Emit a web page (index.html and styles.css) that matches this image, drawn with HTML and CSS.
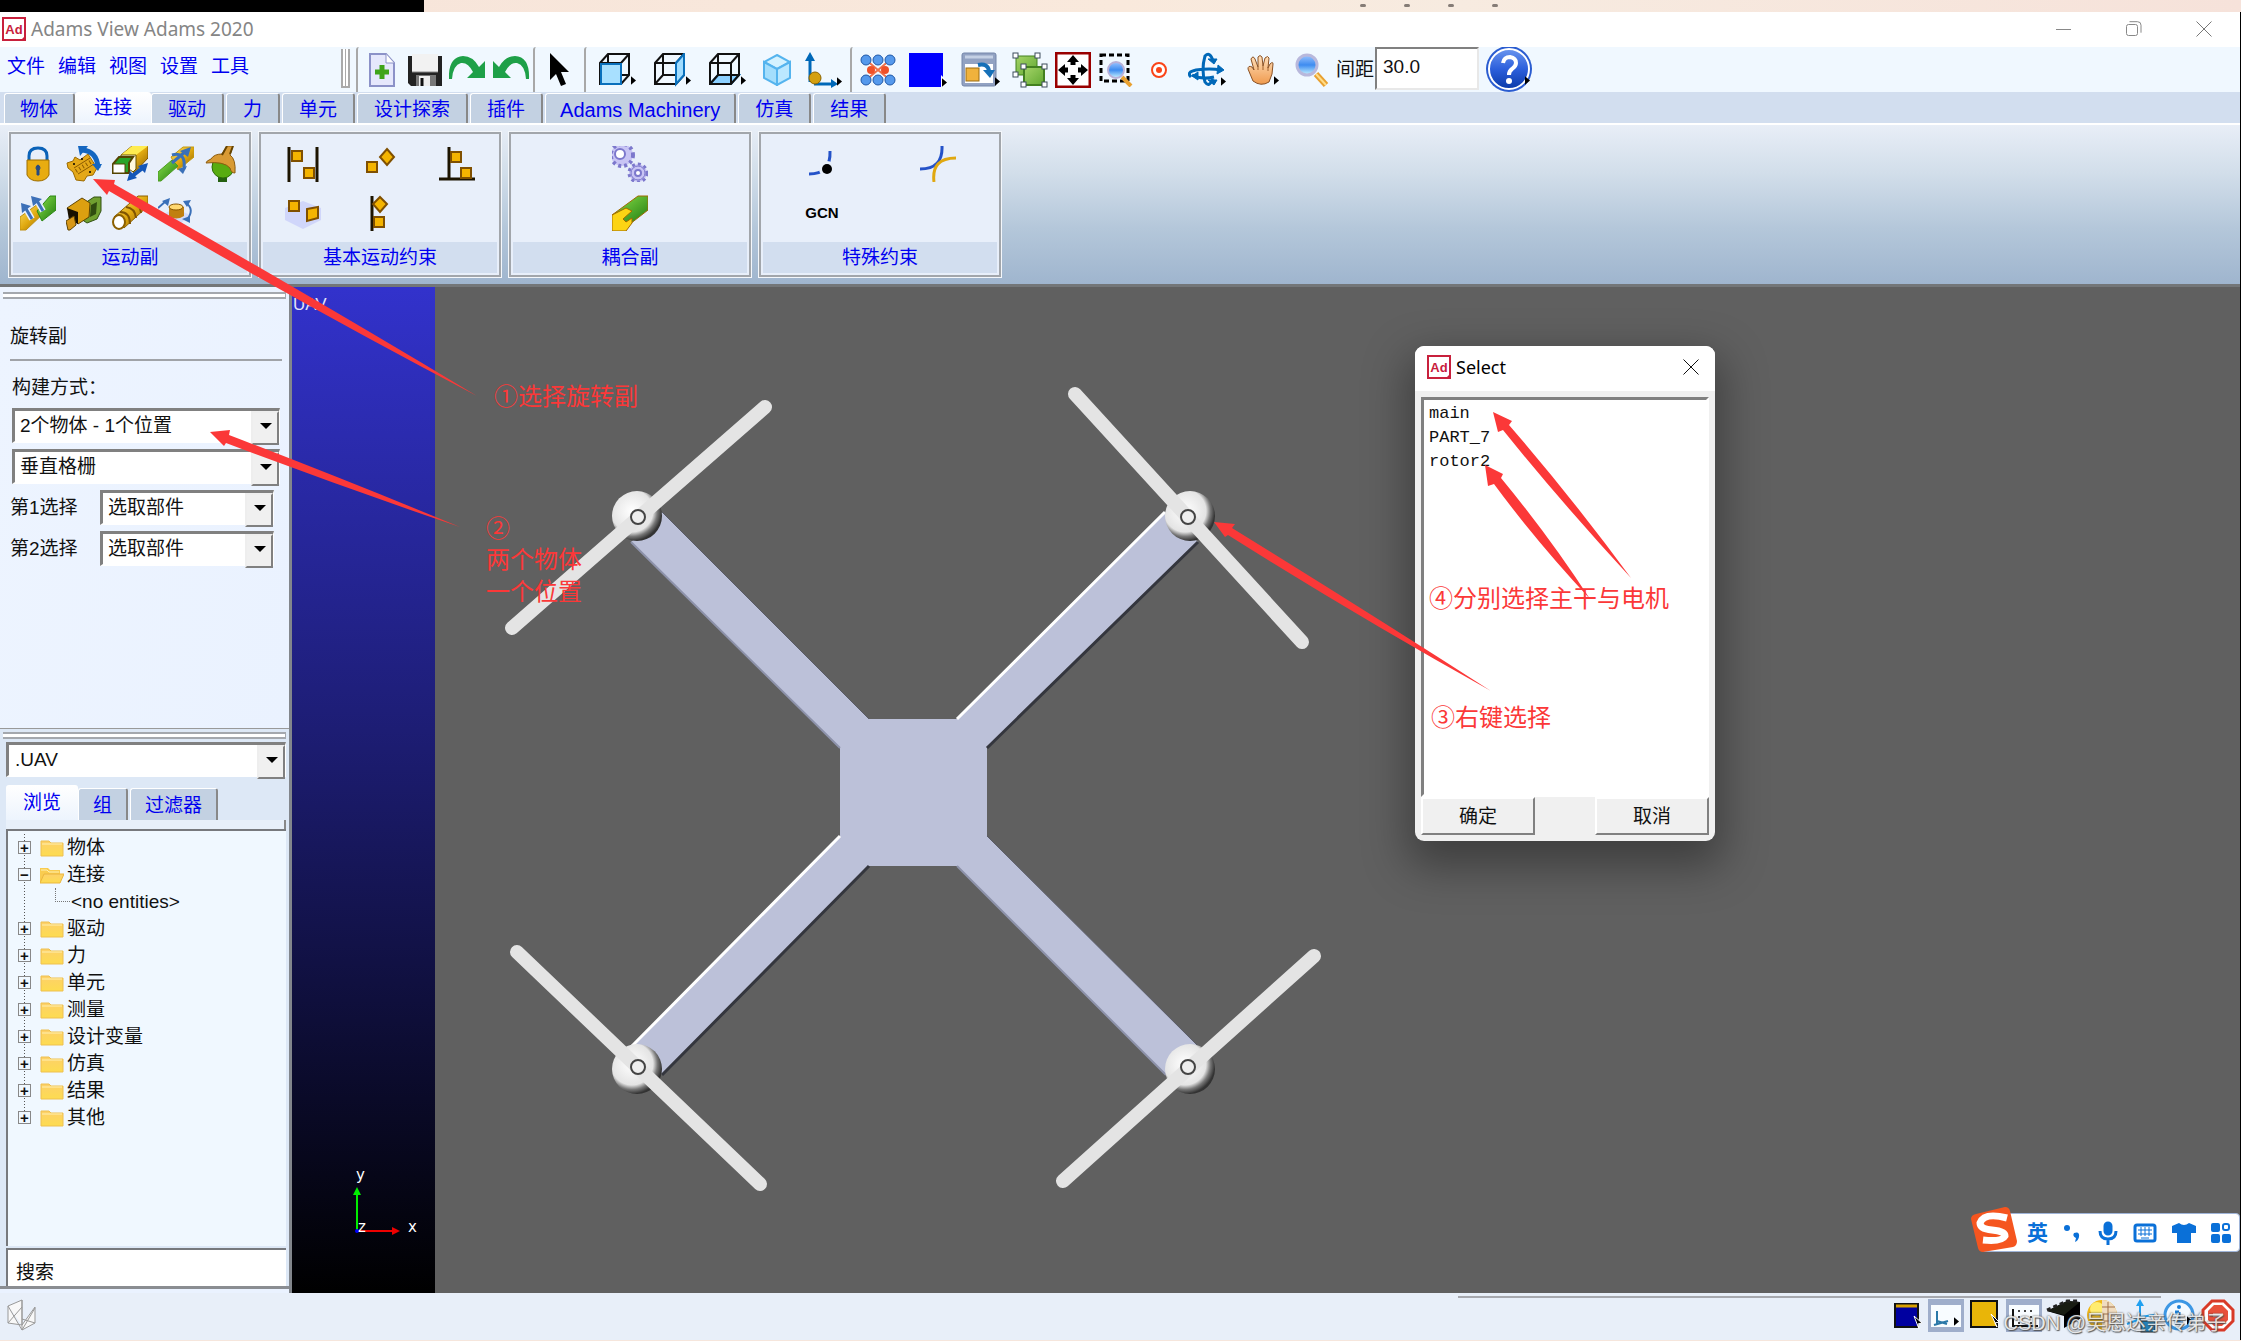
FILE: index.html
```html
<!DOCTYPE html>
<html lang="zh-CN">
<head>
<meta charset="utf-8">
<title>Adams View Adams 2020</title>
<link rel="stylesheet" href="styles.css">
</head>
<body>
<svg class="defs" aria-hidden="true">
  <defs>
    <linearGradient id="gold" x1="0" y1="0" x2="1" y2="1"><stop offset="0" stop-color="#ffe46a"/><stop offset=".5" stop-color="#e0a910"/><stop offset="1" stop-color="#8a5c00"/></linearGradient>
    <linearGradient id="leaf" x1="0" y1="0" x2="1" y2="1"><stop offset="0" stop-color="#8be24a"/><stop offset="1" stop-color="#1f7a10"/></linearGradient>
    <linearGradient id="folder" x1="0" y1="0" x2="0" y2="1"><stop offset="0" stop-color="#fdd06a"/><stop offset="1" stop-color="#fddc50"/></linearGradient>
    <linearGradient id="lens" x1="0" y1="0" x2="0" y2="1"><stop offset="0" stop-color="#9cc4ff"/><stop offset=".5" stop-color="#3e8cf0"/><stop offset="1" stop-color="#c8f4ff"/></linearGradient>
    <linearGradient id="help" x1="0" y1="0" x2="0" y2="1"><stop offset="0" stop-color="#6a95ee"/><stop offset=".5" stop-color="#2c5fdc"/><stop offset="1" stop-color="#0a3aa8"/></linearGradient>
    <linearGradient id="green" x1="0" y1="0" x2="1" y2="1"><stop offset="0" stop-color="#a5d468"/><stop offset="1" stop-color="#61a832"/></linearGradient>
    <linearGradient id="skin" x1="0" y1="0" x2="0" y2="1"><stop offset="0" stop-color="#ffe0bb"/><stop offset="1" stop-color="#ef9a4e"/></linearGradient>
    <symbol id="fly" viewBox="0 0 6 10"><path d="M0 0v10l6-5z" fill="#000"/></symbol>
    <symbol id="ad" viewBox="0 0 24 24"><rect x="1" y="1" width="22" height="22" fill="#fff" stroke="#c8203c" stroke-width="2"/><path d="M18 24h6v-6z" fill="#c8203c"/><text x="12" y="17" text-anchor="middle" font-family="Liberation Sans, sans-serif" font-weight="bold" font-size="13" fill="#c8203c">Ad</text></symbol>
    <symbol id="fold" viewBox="0 0 22 18"><path d="M0 17V2h8l2 2h12v13z" fill="url(#folder)" stroke="#eec050"/><path d="M1 5h20" stroke="#fff0b0"/></symbol>
    <symbol id="foldopen" viewBox="0 0 24 18"><path d="M0 17V2h8l2 2h10v13z" fill="#f9cc50"/><path d="M1 4h6l2 2h10" stroke="#fff0b0" fill="none"/><path d="M0 17l4-9h20l-4 9z" fill="url(#folder)" stroke="#eab63e"/></symbol>
    <symbol id="cube" viewBox="0 0 32 32"><path d="M1 10L9 1h21v21l-8 9H1zM1 10h21v21M22 10l8-9M9 1v21h21M9 22l-8 9" fill="none" stroke="#111" stroke-width="2"/></symbol>
    <symbol id="sq" viewBox="0 0 12 12"><rect x="1" y="1" width="10" height="10" fill="#f4b400" stroke="#805000" stroke-width="2"/></symbol>
  </defs>
</svg>

<div class="desktop"><div class="desktop-dark"></div><div class="desktop-dots"><i></i><i></i><i></i><i></i></div></div>

<div class="app">
  <header class="titlebar">
    <svg class="ad"><use href="#ad"/></svg>
    <h1>Adams View Adams 2020</h1>
    <div class="winbtns">
      <button aria-label="最小化"><svg width="16" height="16"><path d="M0 8.500h15" stroke="#888"/></svg></button>
      <button aria-label="还原"><svg width="16" height="16" fill="none" stroke="#888"><rect x=".5" y="3.500" width="11" height="11" rx="2"/><path d="M3.500 .7h8q3.500 0 3.500 3.500v7.500"/></svg></button>
      <button aria-label="关闭"><svg width="16" height="16" stroke="#777"><path d="M.5.5l15 15M15.500.5l-15 15"/></svg></button>
    </div>
  </header>

  <div class="toolbar">
    <nav class="menu"><a href="#">文件</a><a href="#">编辑</a><a href="#">视图</a><a href="#">设置</a><a href="#">工具</a></nav>
    <div class="grip"></div>
    <div class="tools t1">
      <button class="s" aria-label="新建"><svg width="26" height="34"><path d="M1 1h16l8 9v23H1z" fill="#e6e8fc" stroke="#8c92c8" stroke-width="2"/><path d="M17 1v9h8" fill="#fff" stroke="#8c92c8"/><path d="M13 12v14M6 19h14" stroke="#3fa41a" stroke-width="5"/></svg></button>
      <button class="s" aria-label="保存"><svg width="34" height="32"><path d="M0 2h34v30H3l-3-3z" fill="#222"/><rect x="4" y="0" width="26" height="18" fill="#f2f2f2"/><path d="M4 18h26" stroke="#888"/><rect x="8" y="21" width="20" height="11" fill="#777"/><rect x="11" y="22" width="11" height="10" fill="#eee"/><path d="M14 24v8" stroke="#111" stroke-width="3"/></svg></button>
      <button class="s" aria-label="重做"><svg class="up" width="38" height="26"><path d="M0 24Q-1 2 14 1q10 0 16 11l6-6v17H18l6-6Q19 7 12 8 4 10 3 24z" fill="#1ea048"/></svg></button>
      <button class="s" aria-label="撤销"><svg class="up" width="38" height="26"><path d="M37 24Q38 2 23 1 13 1 7 12L1 6v17h18l-6-6q5-10 12-9 8 2 9 16z" fill="#1ea048"/></svg></button>
    </div>
    <div class="tools t2">
      <button class="m" aria-label="选择"><svg width="20" height="34"><path d="M1 0v27l6-6 5 12 5-2-5-12h8z" fill="#000"/></svg></button>
    </div>
    <div class="tools t3">
      <button class="l" aria-label="前视图"><svg width="38" height="34"><use href="#cube" width="32" height="32"/><rect x="2" y="11" width="20" height="20" fill="#a8e0ff" stroke="#0a70bc" stroke-width="2"/><use href="#fly" x="32" y="23" width="5" height="9"/></svg></button>
      <button class="l" aria-label="右视图"><svg width="38" height="34"><use href="#cube" width="32" height="32"/><path d="M22 10l8-9v21l-8 9z" fill="#a0dcff" stroke="#0a70bc" stroke-width="2"/><use href="#fly" x="32" y="23" width="5" height="9"/></svg></button>
      <button class="l" aria-label="底视图"><svg width="38" height="34"><path d="M1 31l8-9h21l-8 9z" fill="#8cd0ff" stroke="#0a70bc" stroke-width="2"/><use href="#cube" width="32" height="32"/><use href="#fly" x="32" y="23" width="5" height="9"/></svg></button>
      <button class="s" aria-label="等轴测"><svg width="28" height="32" stroke="#55b4ee" stroke-width="2"><path d="M14 1l13 7-13 7L1 8z" fill="#d4f2ff"/><path d="M1 8l13 7v16L1 24z" fill="#a4defc"/><path d="M27 8l-13 7v16l13-7z" fill="#bbe8ff"/></svg></button>
      <button class="m" aria-label="坐标"><svg width="38" height="36"><path d="M6 30V6M10 32h20" stroke="#0068b8" stroke-width="3"/><path d="M6 0l5 9H1zM34 32l-7-5v9z" fill="#0068b8"/><circle cx="11" cy="26" r="6" fill="#d4a010" stroke="#8c6400"/><use href="#fly" x="33" y="25" width="5" height="9"/></svg></button>
    </div>
    <div class="tools t4">
      <button class="m" aria-label="模型"><svg width="36" height="32"><path d="M6 6l24 20M30 6L6 26" stroke="#f0704a" stroke-width="2"/><g fill="#5599ec" stroke="#2058a8"><circle cx="6" cy="6" r="5"/><circle cx="18" cy="6" r="5"/><circle cx="30" cy="6" r="5"/><circle cx="6" cy="26" r="5"/><circle cx="18" cy="26" r="5"/><circle cx="30" cy="26" r="5"/></g><circle cx="11" cy="16" r="4" fill="#f05028"/><circle cx="25" cy="16" r="4" fill="#f05028"/></svg></button>
      <button class="m" aria-label="颜色"><svg width="38" height="34"><rect width="34" height="34" fill="#0000fe"/><path d="M32 22l7 7-7 7z" fill="#fff"/><use href="#fly" x="33" y="25" width="5" height="9"/></svg></button>
      <button class="l" aria-label="窗口"><svg width="40" height="36"><rect x="1" y="1" width="34" height="33" rx="2" fill="#92a2c2" stroke="#7486aa"/><path d="M4 5h28" stroke="#c4d0e4" stroke-width="3"/><rect x="4" y="12" width="28" height="19" fill="#fff"/><rect x="5" y="16" width="13" height="13" fill="#f0b23c" stroke="#9c6c10"/><path d="M17 13q10-2 11 6" stroke="#1670b8" stroke-width="4" fill="none"/><path d="M22 18h12l-5 8z" fill="#1670b8"/><use href="#fly" x="34" y="25" width="5" height="9"/></svg></button>
      <button class="s" aria-label="分组"><svg width="36" height="36"><rect x="4" y="4" width="21" height="19" fill="url(#green)" stroke="#438020"/><rect x="12" y="15" width="20" height="18" fill="url(#green)" stroke="#438020" stroke-width="2"/><g fill="#fff" stroke="#3c4c5c"><rect x="1" y="1" width="5" height="5"/><rect x="23" y="1" width="5" height="5"/><rect x="1" y="20" width="5" height="5"/><rect x="9" y="12" width="5" height="5"/><rect x="30" y="12" width="5" height="5"/><rect x="9" y="30" width="5" height="5"/><rect x="30" y="30" width="5" height="5"/></g></svg></button>
      <button class="s" aria-label="适合窗口"><svg width="36" height="36"><rect x="1" y="1" width="34" height="34" fill="#fff" stroke="#900" stroke-width="3"/><path d="M18 7v6M18 23v6M7 18h6M23 18h6" stroke="#000" stroke-width="5"/><path d="M18 3l6 7H12zM18 33l6-7H12zM3 18l7-6v12zM33 18l-7-6v12z"/></svg></button>
      <button class="s" aria-label="框选缩放"><svg width="34" height="34"><rect x="2" y="2" width="27" height="26" fill="none" stroke="#000" stroke-width="3" stroke-dasharray="5 3"/><path d="M23 24l9 9" stroke="#e8a030" stroke-width="4"/><circle cx="17" cy="17" r="8" fill="url(#lens)" stroke="#b8b0d8" stroke-width="2"/></svg></button>
      <button class="s" aria-label="中心"><svg width="18" height="18"><circle cx="9" cy="9" r="7" fill="#fff" stroke="#fa4418" stroke-width="2"/><circle cx="9" cy="9" r="3" fill="#fa4418"/></svg></button>
      <button class="l" aria-label="旋转"><svg width="40" height="36" fill="none" stroke="#0068b8" stroke-width="3"><path d="M25 9Q22-1 17 4q-4 14 0 26 4 6 8-3M3 25Q-2 20 8 18q14-2 25 0M4 23q10 5 22 2"/><path d="M20 7h9l-3 5zM30 13l6 5-7 4zM20 28h9l-3 5zM10 20v8l-6-4z" fill="#0068b8" stroke-width="1"/><use href="#fly" x="33" y="25" width="5" height="9" stroke="none"/></svg></button>
      <button class="l" aria-label="平移"><svg width="32" height="32"><path d="M6 27L1 15q0-4 4-2l2 3L4 5q2-4 4 0l3 8V3q2-3 4 0l1 9 2-8q3-3 4 0l-1 10 2-4q3-3 3 0l-1 10-3 8q-8 5-16-1z" fill="url(#skin)" stroke="#8a5226"/><path d="M11 13v3M16 12v4M21 13v4" stroke="#a0622e"/><use href="#fly" x="27" y="22" width="5" height="9"/></svg></button>
      <button class="s" aria-label="缩放"><svg width="34" height="34"><path d="M21 21l10 11" stroke="#e8a030" stroke-width="6"/><path d="M21 21l10 11" stroke="#ffdd88" stroke-width="2"/><circle cx="12" cy="12" r="10" fill="url(#lens)" stroke="#b8b8dc" stroke-width="3"/></svg></button>
    </div>
    <label class="spacing" for="spacing">间距</label>
    <input class="sunk" id="spacing" type="text" value="30.0">
    <button class="help" aria-label="帮助"><svg width="50" height="45"><circle cx="24" cy="22" r="23" fill="#2a5cd0"/><circle cx="24" cy="22" r="20" fill="url(#help)" stroke="#fff" stroke-width="2"/><path d="M18 16q1-6 7-6 6 1 6 6 0 3-4 6-3 2-3 6" fill="none" stroke="#fff" stroke-width="4"/><circle cx="24" cy="34" r="3" fill="#fff"/><use href="#fly" x="40" y="29" width="5" height="9"/></svg></button>
  </div>

  <div class="tabs main-tabs" role="tablist">
    <button class="first">物体</button><button class="active">连接</button><button>驱动</button><button>力</button><button>单元</button><button>设计探索</button><button>插件</button><button class="latin">Adams Machinery</button><button>仿真</button><button>结果</button>
  </div>

  <section class="ribbon">
    <div class="group">
      <div class="icons five">
        <button aria-label="固定副"><svg viewBox="0 0 36 36"><path d="M9 16V10q0-8 9-8t9 8v6" fill="none" stroke="#0a62b8" stroke-width="3"/><path d="M7 14h22v15q-3 6-11 6T7 29z" fill="#e8ac10" stroke="#9c6c00"/><path d="M18 19a3 3 0 0 1 1 5v5h-2v-5a3 3 0 0 1 1-5z" fill="#264a80" stroke="#264a80"/></svg></button>
        <button aria-label="旋转副"><svg viewBox="0 0 36 36"><path d="M1 17l6-2 2-4 5 3 8-6 9 14-4 7-6 1-3 5-8-1-3-8-5-4z" fill="#e4a818" stroke="#9c6a00"/><path d="M8 22l16-10M12 28l16-10" stroke="#8a5a00"/><path d="M10 25l16-10" stroke="#8a5a00" stroke-width="4" stroke-dasharray="1 3"/><circle cx="8" cy="18" r="1"/><circle cx="16" cy="13" r="1"/><circle cx="24" cy="26" r="1"/><path d="M16 4q15 1 16 18" fill="none" stroke="#1466c0" stroke-width="5"/><path d="M12 0h10l-8 10zM26 18h10l-4 7z" fill="#1466c0"/></svg></button>
        <button aria-label="移动副"><svg viewBox="0 0 36 36"><path d="M9 9L20 0h16v12L22 27z" fill="url(#gold)" stroke="#7c5400"/><path d="M9 9L20 0h16L24 9z" fill="#ffec50"/><path d="M9 9h15v14l-3 3-4-3V13H9z" fill="#fff8dc" stroke="#665000"/><path d="M1 18l6-7h14l-4 6v10H1z" fill="#2aa428" stroke="#554400" stroke-width="2"/><path d="M1 18h12v9H1z" fill="#fff" stroke="#554400"/><path d="M19 31L32 21" stroke="#1456b8" stroke-width="4"/><path d="M36 17l-3 10-7-7zM15 35l3-10 7 7z" fill="#1456b8"/></svg></button>
        <button aria-label="圆柱副"><svg viewBox="0 0 36 36"><path d="M13 11L25 1h11v10L20 24z" fill="url(#gold)" stroke="#c49a10"/><path d="M0 26l14-12 6 6L3 35H0z" fill="url(#leaf)" stroke="#4c9c20"/><path d="M14 17L28 5M14 9q14-4 12 14" stroke="#3a70b8" stroke-width="3" fill="none"/><path d="M33 1l-3 10-8-6zM29 20l-4 8-5-5z" fill="#3a70b8"/></svg></button>
        <button aria-label="球副"><svg viewBox="0 0 36 36"><path d="M14 26h9v10h-9z" fill="#256010"/><circle cx="19" cy="21" r="11" fill="#58ac10" stroke="#2c6c08"/><path d="M2 17q0-2 5-4 3-5 11-5l5-8h6l-3 9q6 4 5 18-4 0-5-5Q20 15 2 17z" fill="#d89a34" stroke="#8c5c10"/><path d="M23 0l-5 9M29 0l-3 8" stroke="#664400" stroke-width="2"/></svg></button>
        <button aria-label="平面副"><svg viewBox="0 0 36 36"><path d="M0 22L18 9l8 7L6 35H0z" fill="url(#gold)" stroke="#c09010"/><path d="M17 16L30 1h6v14L22 26z" fill="url(#leaf)" stroke="#2c8814"/><path d="M12 24L5 12M23 16L16 4" stroke="#e8f0ff" stroke-width="6"/><path d="M12 24L5 12M23 16L16 4" stroke="#3c70b8" stroke-width="3"/><path d="M1 8l10 3-9 7zM11 1l11 3-9 7z" fill="#3c70b8"/></svg></button>
        <button aria-label="恒速副"><svg viewBox="0 0 36 36"><path d="M19 8l9-6h7v14l-4 8-10 4-6-4z" fill="#70a030" stroke="#305010"/><path d="M25 10l6-3-1 12-6 3z" fill="#304c10"/><path d="M1 13L16 3l8 5-1 14-11 7z" fill="#dca010" stroke="#604400"/><path d="M1 13l11 4v12l-9-4z" fill="#181000"/><path d="M0 26l8-5 2 9-6 5H2z" fill="#d89818" stroke="#604400"/></svg></button>
        <button aria-label="螺旋副"><svg viewBox="0 0 36 36"><path d="M2 22L26 1h10v10L12 33z" fill="url(#gold)" stroke="#8c6000"/><g fill="none" stroke="#805400" stroke-width="2"><path d="M8 17q10 0 10 12M14 12q9 1 10 11M20 7q8 1 9 11"/></g><ellipse cx="7" cy="27" rx="6" ry="7" fill="#fff" stroke="#8c6000" stroke-width="2"/></svg></button>
        <button aria-label="胡克副"><svg viewBox="0 0 36 36"><path d="M4 20l13-7 15 7-15 14z" fill="#d4dcfa"/><path d="M11 12v9q7 5 15 0v-9z" fill="#c08010"/><ellipse cx="18" cy="12" rx="7" ry="3" fill="#ffd870" stroke="#8c5800"/><path d="M0 13L8 6M28 8q9 6 1 17" stroke="#3a70b8" stroke-width="2" fill="none"/><path d="M12 3l-2 8-6-5zM25 6l8-1-4 7zM24 24l8-3v7z" fill="#3a70b8"/></svg></button>
      </div>
      <h2>运动副</h2>
    </div>
    <div class="group">
      <div class="icons three">
        <button aria-label="平行"><svg viewBox="0 0 36 36"><path d="M4 1v35M32 1v35" stroke="#1c1400" stroke-width="3"/><use href="#sq" x="6" y="4" width="12" height="12"/><use href="#sq" x="18" y="21" width="12" height="12"/></svg></button>
        <button aria-label="方向"><svg viewBox="0 0 36 36"><use href="#sq" x="4" y="15" width="12" height="12"/><path d="M25 3l7 8-7 8-7-8z" fill="#f4b400" stroke="#805000" stroke-width="2"/></svg></button>
        <button aria-label="垂直"><svg viewBox="0 0 36 36"><path d="M10 1v33M0 33h36" stroke="#1c1400" stroke-width="3"/><use href="#sq" x="11" y="5" width="12" height="12"/><use href="#sq" x="21" y="21" width="12" height="12"/></svg></button>
        <button aria-label="共面"><svg viewBox="0 0 36 36"><path d="M0 13l18-7 18 7v12l-18 9-18-9z" fill="#d0d6fa"/><use href="#sq" x="3" y="5" width="12" height="12"/><path d="M22 14l11-2v11l-11 3z" fill="#f4b400" stroke="#805000" stroke-width="2"/></svg></button>
        <button aria-label="共线"><svg viewBox="0 0 36 36"><path d="M10 1v35" stroke="#1c1400" stroke-width="3"/><path d="M18 2l7 7-7 8-7-8z" fill="#f4b400" stroke="#805000" stroke-width="2"/><use href="#sq" x="11" y="21" width="12" height="12"/></svg></button>
      </div>
      <h2>基本运动约束</h2>
    </div>
    <div class="group">
      <div class="icons one">
        <button aria-label="齿轮"><svg viewBox="0 0 36 36" fill="#c8c4f4" stroke="#7c78cc"><circle cx="10" cy="9" r="11" stroke-width="4" stroke-dasharray="3 3"/><circle cx="10" cy="9" r="9" stroke="none"/><circle cx="8" cy="8" r="5" fill="#fff" stroke-width="2"/><circle cx="26" cy="27" r="9" stroke-width="3" stroke-dasharray="3 3"/><circle cx="26" cy="27" r="7"/><circle cx="26" cy="27" r="3" fill="#fff" stroke-width="2"/></svg></button>
        <button aria-label="耦合"><svg viewBox="0 0 36 36"><path d="M0 20L26 1h10v14L18 29H9z" fill="url(#leaf)" stroke="#a06a00"/><path d="M0 20l14-7 6 3-9 8 3 3 6-4v5l-6 8H0z" fill="#fcd414" stroke="#a06a00"/></svg></button>
      </div>
      <h2>耦合副</h2>
    </div>
    <div class="group">
      <div class="icons two">
        <button aria-label="点线约束"><svg viewBox="0 0 36 36"><path d="M5 28q22 0 21-23" fill="none" stroke="#2452c8" stroke-width="3"/><circle cx="23" cy="23" r="8" fill="#e8effa"/><circle cx="23" cy="23" r="5"/></svg></button>
        <button aria-label="线线约束"><svg viewBox="0 0 36 36" fill="none" stroke-width="3"><path d="M0 23Q23 23 22 0" stroke="#2452c8"/><path d="M36 12Q11 12 14 36" stroke="#e0a810"/></svg></button>
        <button class="gcn">GCN</button>
      </div>
      <h2>特殊约束</h2>
    </div>
  </section>

  <main class="work">
    <aside class="side">
      <form class="joint">
        <div class="handle"></div>
        <h3>旋转副</h3>
        <fieldset>
          <label for="how">构建方式：</label>
          <div class="drop"><select id="how"><option>2个物体 - 1个位置</option></select></div>
          <div class="drop"><select aria-label="方向"><option>垂直格栅</option></select></div>
          <div class="pick"><label for="p1">第1选择</label><div class="drop"><select id="p1"><option>选取部件</option></select></div></div>
          <div class="pick"><label for="p2">第2选择</label><div class="drop"><select id="p2"><option>选取部件</option></select></div></div>
        </fieldset>
      </form>
      <div class="browser">
        <div class="handle"></div>
        <div class="drop"><select aria-label="模型"><option>.UAV</option></select></div>
        <div class="tabs" role="tablist"><button class="active">浏览</button><button>组</button><button>过滤器</button></div>
        <div class="lip"></div>
        <ul class="tree">
          <li><button>+</button><svg><use href="#fold"/></svg>物体</li>
          <li><button>−</button><svg><use href="#foldopen"/></svg>连接</li>
          <li class="leaf"><i></i>&lt;no entities&gt;</li>
          <li><button>+</button><svg><use href="#fold"/></svg>驱动</li>
          <li><button>+</button><svg><use href="#fold"/></svg>力</li>
          <li><button>+</button><svg><use href="#fold"/></svg>单元</li>
          <li><button>+</button><svg><use href="#fold"/></svg>测量</li>
          <li><button>+</button><svg><use href="#fold"/></svg>设计变量</li>
          <li><button>+</button><svg><use href="#fold"/></svg>仿真</li>
          <li><button>+</button><svg><use href="#fold"/></svg>结果</li>
          <li><button>+</button><svg><use href="#fold"/></svg>其他</li>
        </ul>
        <input class="search" type="text" aria-label="搜索" value="搜索">
      </div>
    </aside>

    <section class="view">
      <div class="sky"><span>UAV</span>
        <svg class="axes" width="80" height="90"><path d="M15 70V30" stroke="#0e0" stroke-width="2"/><path d="M15 26l4 8h-8z" fill="#0e0"/><path d="M16 70h38" stroke="#e00" stroke-width="2"/><path d="M58 70l-8-4v8z" fill="#e00"/><circle cx="15" cy="70" r="2" fill="#00f"/><g font-family="DejaVu Sans, sans-serif" font-size="15" fill="#fff"><text x="14" y="19">y</text><text x="66" y="71">x</text><text x="16" y="71">z</text></g></svg>
      </div>
      <svg class="drone" viewBox="292 287 1948 1006" preserveAspectRatio="xMinYMin meet">
        <defs><radialGradient id="motor" cx=".4" cy=".4" r=".6"><stop offset="0" stop-color="#fff"/><stop offset=".7" stop-color="#e4e4e4"/><stop offset=".85" stop-color="#777"/><stop offset="1" stop-color="#333"/></radialGradient></defs>
        <path d="M840 748L631 542l31-30 207 207h88l208-207 33 30-211 206v88l211 210-32 29-209-209h-88l-207 209-31-28 209-211z" fill="#bcc1d9"/>
        <g fill="none" stroke-width="3">
          <path d="M957 719l208-207M631 1047l209-211" stroke="#fff"/>
          <path d="M987 748l211-206M662 1075l207-209" stroke="#34363e"/>
          <path d="M869 719L662 512M987 836l211 210" stroke="#5a5c68" stroke-width="1"/>
          <path d="M840 748L631 542M957 866l209 209" stroke="#8d92aa" stroke-width="2"/>
        </g>
        <g fill="url(#motor)"><circle cx="637" cy="516" r="25"/><circle cx="1190" cy="516" r="25"/><circle cx="637" cy="1069" r="25"/><circle cx="1190" cy="1069" r="25"/></g>
        <g stroke="#e4e4e4" stroke-width="14" stroke-linecap="round"><path d="M765 407L512 628M1075 394l227 248M517 952l243 232M1314 956l-251 225"/></g>
        <g fill="#eee" stroke="#444" stroke-width="2"><circle cx="638" cy="517" r="7"/><circle cx="1188" cy="517" r="7"/><circle cx="638" cy="1067" r="7"/><circle cx="1188" cy="1067" r="7"/></g>
      </svg>

      <div class="dialog" role="dialog" aria-label="Select">
        <header><svg class="ad"><use href="#ad"/></svg><h2>Select</h2><button aria-label="关闭"><svg width="16" height="16" stroke="#111"><path d="M.5.5l15 15M15.500.5l-15 15"/></svg></button></header>
        <ul class="list"><li>main</li><li>PART_7</li><li>rotor2</li></ul>
        <footer><button>确定</button><button>取消</button></footer>
      </div>

      <div class="ime">
        <svg width="48" height="46"><path d="M6 8L35 1q4 0 5 4l7 30q0 5-4 6l-30 5q-4 0-5-4L1 13q0-4 5-5z" fill="#f5551f"/><path d="M37 12Q14 6 10 17q0 6 12 7 13 1 13 6-3 6-22 4" fill="none" stroke="#fff" stroke-width="7"/></svg>
        <b>英</b>
        <svg width="20" height="22"><circle cx="4" cy="6" r="3" fill="#0a70d8"/><path d="M11 11q6-2 5 4-1 4-4 5l1-4q-4-2-2-5z" fill="#0a70d8"/></svg>
        <svg width="20" height="24" fill="none" stroke="#0a70d8" stroke-width="3"><rect x="7" y="2" width="6" height="11" rx="3" fill="#0a70d8"/><path d="M2 10q0 8 8 8t8-8M10 18v6"/></svg>
        <svg width="24" height="20" fill="none" stroke="#0a70d8"><rect x="2" y="2" width="20" height="16" rx="2" stroke-width="3"/><path d="M5 7h14M5 11h14M8 15h8M8 4v9M12 4v9M16 4v9" stroke-width="1"/></svg>
        <svg width="24" height="22"><path d="M7 1q5 4 10 0l7 3v7h-5v10H5V11H0V4z" fill="#0a70d8"/></svg>
        <svg width="20" height="20" fill="#0a70d8"><rect width="9" height="9" rx="2"/><rect y="11" width="9" height="9" rx="2"/><rect x="11" y="11" width="9" height="9" rx="2"/><rect x="12" y="1" width="6" height="6" rx="2" fill="none" stroke="#0a70d8" stroke-width="2"/></svg>
      </div>
    </section>
  </main>

  <footer class="status">
    <svg class="wing" width="30" height="32" fill="#f8f8f8" stroke="#999"><path d="M1 7l14-6v25L1 24zM1 7l14 24 13-7V8L15 26M15 31V1M1 24L15 8M15 31L28 9M15 20l13 4"/></svg>
    <div class="status-tools">
      <button aria-label="背景"><svg width="36" height="34"><rect x="6" y="5" width="23" height="23" fill="#0000a0" stroke="#111" stroke-width="2"/><path d="M7 7h21" stroke="#d8a000" stroke-width="3"/><path d="M25 17l8 7-4 1 1 5z" fill="#000" stroke="#fff"/></svg></button>
      <button aria-label="视图坐标"><svg width="36" height="34"><rect width="36" height="33" fill="#9faecb"/><rect x="3" y="6" width="30" height="22" fill="#f8fcff"/><path d="M9 26V12M6 26l14-4M9 22l10 3" stroke="#2a78a8" stroke-width="2"/><use href="#fly" x="26" y="18" width="5" height="9"/></svg></button>
      <button aria-label="渲染"><svg width="36" height="34"><rect x="4" y="2" width="26" height="26" fill="#e9b508" stroke="#111" stroke-width="2"/><path d="M24 15l8 8-4 1 2 4z" stroke="#fff"/></svg></button>
      <button aria-label="栅格"><svg width="36" height="34"><rect width="36" height="33" fill="#9faecb"/><rect x="3" y="6" width="30" height="23" fill="#f8fcff"/><path d="M7 10v17h25" stroke="#111" stroke-width="2" fill="none"/><path d="M12 12h18M12 18h18M12 24h18" stroke="#444" stroke-width="2" stroke-dasharray="2 4"/></svg></button>
      <button aria-label="实体"><svg width="36" height="34"><path d="M2 12L22 2l13 1v17L19 29V17z" fill="#000"/><path d="M2 12L22 2l13 1-16 13z" fill="#181c12"/><path d="M2 11L22 2h12" fill="none" stroke="#222" stroke-width="3" stroke-dasharray="4 3"/></svg></button>
      <button aria-label="线框"><svg width="36" height="34"><circle cx="18" cy="16" r="15" fill="#f0b818"/><circle cx="13" cy="10" r="7" fill="#ffec70"/><path d="M18 1a15 15 0 0 1 0 30z" fill="#f0dcc0"/><path d="M18 8h13M18 15h15M18 22h13M24 3v26" stroke="#a07048" fill="none"/></svg></button>
      <button aria-label="图标"><svg width="36" height="34"><path d="M17 22V3M17 18l14-2M17 20L4 25" stroke="#20a0f0" stroke-width="2"/><path d="M17 0l4 7h-8z" fill="#20a0f0"/><rect x="18" y="22" width="14" height="11" fill="#2484bc" stroke="#222"/></svg></button>
      <button aria-label="信息"><svg width="36" height="34"><circle cx="17" cy="16" r="14" fill="#f4faff" stroke="#3d97e4" stroke-width="3"/><path d="M17 13v11M13 24h8M13 13h4" stroke="#1c80d8" stroke-width="3"/><circle cx="17" cy="8" r="2" fill="#1c80d8"/><use href="#fly" x="25" y="17" width="5" height="9"/></svg></button>
      <button aria-label="停止"><svg width="36" height="34"><path d="M11 2h12l9 9v11l-9 9H11l-9-9V11z" fill="#fff" stroke="#d83a28" stroke-width="3"/><path d="M13 6h8l6 6v9l-6 6h-8l-6-6v-9z" fill="#e8503a"/><path d="M12 16h10" stroke="#fff" stroke-width="3"/></svg></button>
    </div>
    <span class="watermark">CSDN @吴恩达亲传弟子</span>
  </footer>
</div>

<svg class="notes" viewBox="0 0 2241 1341" preserveAspectRatio="xMinYMin meet">
  <path d="M93 179l22 1-1 4q190 108 363 212-180-94-368-205l-2 4zM210 432l20-2-1 5q120 46 231 92-118-40-234-84l-2 3zM1214 522l21 2-3 4q136 84 259 163-136-76-263-156l-3 2zM1493 412l19 9-3 4q64 74 122 153-70-76-128-148l-5 2zM1485 465l18 9-2 4q48 58 89 121-54-58-96-115l-6 2z"/>
  <text x="494" y="405">①选择旋转副</text>
  <text x="486" y="537">②</text>
  <text x="486" y="568">两个物体</text>
  <text x="486" y="600">一个位置</text>
  <text x="1429" y="607">④分别选择主干与电机</text>
  <text x="1431" y="726">③右键选择</text>
</svg>
</body>
</html>
```
FILE: styles.css
```css
* { box-sizing: border-box; }
body {
  margin: 0;
  min-height: 100vh;
  display: flex;
  flex-direction: column;
  position: relative;
  font: 19px/24px "Liberation Sans", "Noto Sans CJK SC", sans-serif;
  color: #111;
  background: #f6e6dc;
}
button, input, select { font: inherit; color: inherit; margin: 0; padding: 0; border: 0; border-radius: 0; background: none; }
h1, h2, h3, ul, fieldset { margin: 0; padding: 0; border: 0; font-size: inherit; font-weight: normal; list-style: none; }
svg { display: block; flex: none; }
.defs { position: absolute; width: 0; height: 0; }

.desktop { display: flex; height: 12px; background: linear-gradient(90deg, #f6e3d9, #f9e9dc 50%, #f7ebe0 65%, #f6e2da); }
.desktop-dark { width: 424px; background: #000; }
.desktop-dots { display: flex; gap: 38px; padding: 4px 0 0 936px; }
.desktop-dots i { width: 6px; height: 3px; border-radius: 2px; background: #857c76; }

.app { flex: 1; display: flex; flex-direction: column; border-right: 1px solid #000; margin-bottom: 1px; }
.ad { width: 24px; height: 24px; }

.titlebar { display: flex; align-items: center; height: 35px; padding: 0 0 1px 2px; gap: 5px; background: #fff; font-family: "Noto Sans", sans-serif; color: #858585; }
.winbtns { display: flex; gap: 54px; margin-left: auto; padding-right: 28px; }

/* Toolbar */
.toolbar { display: flex; height: 45px; background: #f0f8ff; }
.menu { display: flex; gap: 13px; width: 341px; padding: 8px 0 0 7px; }
.menu a { color: #0000f0; text-decoration: none; }
.grip { width: 9px; height: 39px; margin: 2px 6px 0 0; border: solid #a9a9a9; border-width: 0 2px 2px; background: linear-gradient(90deg, #fff 2px, #a9a9a9 2px 3px, #fff 3px); }
.tools { display: flex; align-items: center; border-left: 2px solid #a8a8a8; border-radius: 3px 0 0; }
.tools button { display: flex; justify-content: center; }
.tools .s { width: 43px; }
.tools .m { width: 50px; }
.tools .l { width: 55px; }
.tools .up { margin-bottom: 4px; }
.t1 { padding: 0 1px 0 2px; }
.t2 { padding-right: 1px; }
.t2 .m { width: 48px; }
.t3 { padding: 0 2px 0 4px; }
.t4 { padding-left: 1px; }
.spacing { width: 42px; padding: 11px 0 0 3px; }
.sunk { width: 104px; height: 43px; padding: 0 0 3px 6px; border: 2px solid; border-color: #808080 #e8e8e8 #e8e8e8 #808080; background: #fff; }
.help { margin-left: 6px; }

/* Tabs */
.tabs { display: flex; align-items: flex-end; gap: 2px; background: #d2deef; color: #0000f0; }
.tabs button { height: 30px; padding: 2px 16px 0; border-top: 1px solid #fff; border-left: 1px solid #fff; border-right: 2px solid #888; border-radius: 3px 3px 0 0; background: #c3d1e2; }
.tabs .active { align-self: stretch; height: auto; margin: 0 -2px; padding: 0 19px; border: 0; background: linear-gradient(#fff, #edf4fd); }
.main-tabs { height: 31px; padding-left: 4px; }
.main-tabs .first { padding: 2px 15px 0; }
.main-tabs .latin { padding: 2px 14px 0; font-size: 20px; }

/* Ribbon */
.ribbon { display: flex; gap: 8px; height: 164px; padding: 7px 8px 7px 9px; border-top: 2px solid #fff; border-bottom: 3px solid #737678; background: linear-gradient(#e8eef7, #d2deea 30%, #b4c7da 65%, #9fb5ce); }
.group { display: flex; flex-direction: column; width: 242px; padding: 2px; border: 2px solid #a2a6ab; outline: 1px solid #f4f7fb; background: #e8effa; }
.group h2 { height: 31px; margin-top: auto; line-height: 32px; text-align: center; color: #0000f0; background: #d2deef; }
.icons { display: grid; grid-auto-rows: 36px; row-gap: 13px; justify-content: center; padding-top: 10px; }
.icons button { display: flex; justify-content: center; }
.icons svg { width: 36px; height: 36px; }
.five { grid-template-columns: repeat(5, 46px); }
.three { grid-template-columns: repeat(3, 77px); }
.one { grid-template-columns: 77px; }
.two { grid-template-columns: repeat(2, 116px); }
.icons .gcn { align-items: center; font-size: 15px; font-weight: bold; color: #000; }

/* Side panel */
.work { flex: 1; display: flex; }
.side { display: flex; flex-direction: column; width: 292px; border-right: 3px solid #82868c; background: #eaf2ff; }
.joint { height: 442px; padding: 5px 3px 0; background: linear-gradient(100deg, #edf4ff, #eaf2ff); border-bottom: 1px solid #999; }
.handle { height: 7px; border: solid #a4a8ae; border-width: 2px 1px 2px 0; background: #fff; }
.joint h3 { height: 62px; margin: 0 4px 0 7px; padding-top: 26px; border-bottom: 2px solid #a0a3a8; }
fieldset { display: flex; flex-direction: column; gap: 6px; min-width: 0; padding: 15px 6px 0 9px; }
fieldset > label { margin-bottom: 2px; }
.drop { position: relative; height: 35px; border: solid; border-width: 3px 1px 2px 3px; border-color: #808080 #fff #fff #808080; background: #fff; }
.drop select { appearance: none; width: 100%; height: 30px; padding: 0 0 0 5px; }
.drop::after { content: ""; position: absolute; right: 0; top: 0; width: 24px; height: 30px; border: 2px solid; border-color: #eee #808080 #808080 #eee; background: #f0f0f0; pointer-events: none; }
.drop::before { content: ""; position: absolute; z-index: 1; right: 7px; top: 12px; border: solid transparent; border-width: 6px 6px 0; border-top-color: #000; pointer-events: none; }
.pick { display: flex; align-items: center; margin: 0 6px 0 -2px; }
.pick label { width: 90px; }
.pick .drop { flex: 1; }

.browser { flex: 1; display: flex; flex-direction: column; padding: 3px 3px 0 6px; border-bottom: 3px solid #8a8d92; background: #dde8f6; margin-bottom: 4px; }
.browser > .handle { margin: 0 0 3px -3px; }
.browser .drop select { padding-left: 6px; }
.browser .tabs { height: 43px; padding-top: 8px; background: none; }
.browser .tabs button { height: 32px; padding: 2px 14px 0; }
.browser .tabs .active { height: auto; margin-left: 0; padding: 0 17px; }
.lip { height: 9px; border-right: 2px solid #888; background: #e8f0fa; }
.tree { flex: 1; padding: 3px 0 0 10px; border: solid #77797d; border-width: 2px 0 0 2px; background: #f0f8ff; }
.tree li { display: flex; align-items: center; height: 27px; gap: 9px; background: repeating-linear-gradient(#555 0 1px, transparent 1px 3px) 6px 0/1px 100% no-repeat; }
.tree li:last-child { background-size: 1px 14px; }
.tree button { width: 13px; height: 13px; border: 1px solid #888; background: #f0f8ff; font: bold 15px/10px "Liberation Sans", sans-serif; }
.tree svg { width: 24px; height: 18px; margin-right: -6px; }
.tree .leaf { gap: 1px; padding-left: 37px; }
.leaf i { width: 15px; height: 14px; margin-bottom: 13px; border: dotted #777; border-width: 0 0 1px 1px; }
.search { height: 38px; margin-top: 2px; padding: 5px 0 0 8px; border: solid #77797d; border-width: 2px 0 0 2px; background: #fff; }

/* Model view */
.view { position: relative; flex: 1; overflow: hidden; background: #606060; }
.sky { position: relative; width: 143px; height: 100%; padding: 5px 0 0 1px; background: linear-gradient(#3232cc, #1e1e78 42%, #000); }
.sky span { font-size: 17px; color: #e4e4f8; }
.axes { position: absolute; left: 50px; bottom: 42px; }
.drone { position: absolute; inset: 0; width: 100%; height: auto; }

.dialog { position: absolute; left: 1123px; top: 59px; width: 300px; height: 495px; display: flex; flex-direction: column; padding: 0 6px 6px; border-radius: 9px; background: #f0f0f0; box-shadow: 0 18px 44px 8px rgba(0, 0, 0, .35); }
.dialog header { display: flex; align-items: center; height: 45px; margin: 0 -6px 6px; padding: 0 16px 3px 12px; gap: 5px; border-radius: 9px 9px 0 0; background: #fff; font-family: "Noto Sans", sans-serif; font-size: 18px; color: #000; }
.dialog header button { margin-left: auto; }
.list { flex: 1; padding: 2px 5px; border: 3px solid; border-color: #808080 #fff #fff #808080; background: #fff; font: 17px/24px "Liberation Mono", monospace; }
.dialog footer { display: flex; justify-content: space-between; }
.dialog footer button { width: 114px; height: 38px; padding-top: 2px; border: 2px solid; border-color: #fff #808080 #808080 #fff; background: #f0f0f0; }

.ime { position: absolute; right: 0; bottom: 41px; display: flex; align-items: center; gap: 15px; height: 39px; padding-right: 8px; border: 1px solid #9fb4d8; border-radius: 0 4px 4px 0; background: #fff; }
.ime svg:first-child { margin: -7px -6px 0 -14px; }
.ime b { color: #0a70d8; font-size: 21px; }

/* Status bar */
.status { position: relative; display: flex; justify-content: space-between; align-items: flex-start; height: 47px; padding: 6px 3px 0 7px; background: #e8eff9; }
.status::before { content: ""; position: absolute; right: 79px; top: 3px; width: 703px; height: 2px; background: #a6a8ae; }
.status-tools { display: flex; gap: 3px; }
.status-tools button { width: 36px; }
.watermark { position: absolute; right: 14px; bottom: 5px; font-size: 20px; color: #e8e8e8; opacity: .9; text-shadow: 0 0 2px #333, 1px 1px 1px #555; }

/* Callouts over the window */
.notes { position: absolute; left: 0; top: 0; width: 100%; height: auto; fill: #fb3838; font: 24px "Noto Sans CJK SC", sans-serif; pointer-events: none; }
```
